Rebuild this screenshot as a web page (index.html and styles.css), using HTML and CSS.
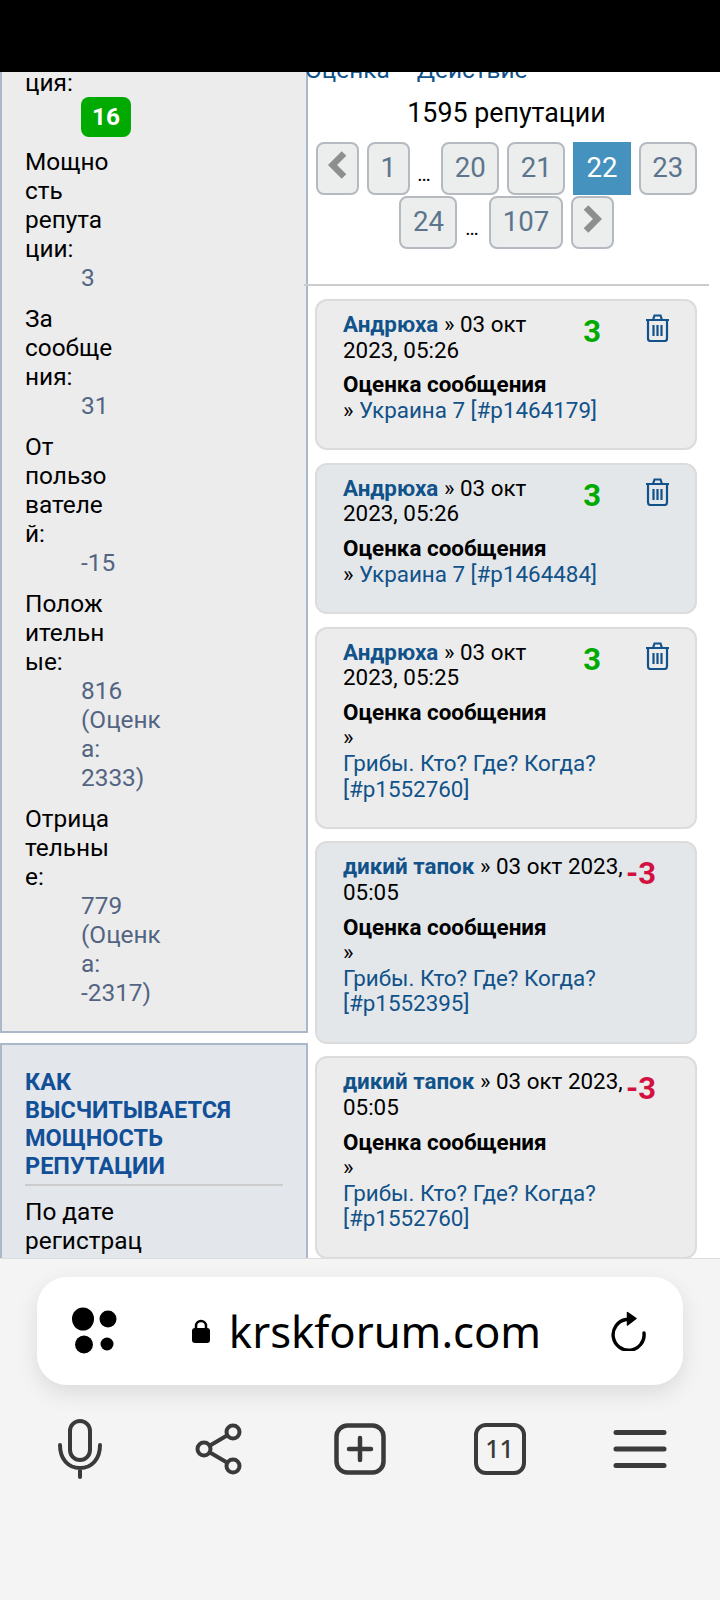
FILE: index.html
```html
<!DOCTYPE html>
<html lang="ru">
<head>
  <meta charset="UTF-8">
  <meta name="viewport" content="width=device-width, initial-scale=1.0">
  <title>Репутация</title>
  <link rel="stylesheet" href="styles.css">
</head>
<body>

<div class="status-bar"></div>

<div class="viewport">
  <div class="columns">

    <div class="sidebar">
      <div class="panel panel-stats">
        <dl class="stats">
          <dt>Репута<br>ция:</dt>
          <dd><span class="badge">16</span></dd>
          <dt>Мощно<br>сть<br>репута<br>ции:</dt>
          <dd>3</dd>
          <dt>За<br>сообще<br>ния:</dt>
          <dd>31</dd>
          <dt>От<br>пользо<br>вателе<br>й:</dt>
          <dd>-15</dd>
          <dt>Полож<br>ительн<br>ые:</dt>
          <dd>816<br>(Оценк<br>а:<br>2333)</dd>
          <dt>Отрица<br>тельны<br>е:</dt>
          <dd>779<br>(Оценк<br>а:<br>-2317)</dd>
        </dl>
      </div>
      <div class="panel panel-info">
        <h3>Как<br>высчитывается мощность репутации</h3>
        <p>По дате<br>регистрац<br>ии</p>
      </div>
    </div>

    <div class="main">
      <div class="tabs"><a href="#">Оценка</a><a href="#">Действие</a></div>
      <div class="total">1595 репутации</div>

      <div class="pagination">
        <a class="page-btn arrow" href="#">
          <svg width="19" height="28" viewBox="0 0 19 28"><path d="M16 2.5 4.500 14 16 25.500" fill="none" stroke="#8e8e8e" stroke-width="6.500"/></svg>
        </a>
        <a class="page-btn" href="#">1</a>
        <span class="dots">…</span>
        <a class="page-btn" href="#">20</a>
        <a class="page-btn" href="#">21</a>
        <a class="page-btn active" href="#">22</a>
        <a class="page-btn" href="#">23</a>
        <a class="page-btn" href="#">24</a>
        <span class="dots">…</span>
        <a class="page-btn" href="#">107</a>
        <a class="page-btn arrow" href="#">
          <svg width="19" height="28" viewBox="0 0 19 28"><path d="M3 2.500 14.500 14 3 25.500" fill="none" stroke="#8e8e8e" stroke-width="6.500"/></svg>
        </a>
      </div>

      <hr class="rule">

      <div class="card">
        <a class="trash" href="#">
          <svg width="25" height="28" viewBox="0 0 25 28" fill="none" stroke="#105289" stroke-width="2.200"><path d="M1 6h23M8 6l1.500-4.500h6L17 6M3 6v18.500a2.500 2.500 0 0 0 2.500 2.500h14a2.500 2.500 0 0 0 2.500-2.500V6M8.500 11v11M12.500 11v11M16.500 11v11"/></svg>
        </a>
        <span class="score plus">3</span>
        <div class="meta"><a class="author" href="#">Андрюха</a> » 03 окт 2023, 05:26</div>
        <div class="reason">Оценка сообщения</div>
        <div>» <a class="topic" href="#">Украина 7 [#p1464179]</a></div>
      </div>

      <div class="card alt">
        <a class="trash" href="#">
          <svg width="25" height="28" viewBox="0 0 25 28" fill="none" stroke="#105289" stroke-width="2.200"><path d="M1 6h23M8 6l1.500-4.500h6L17 6M3 6v18.500a2.500 2.500 0 0 0 2.500 2.500h14a2.500 2.500 0 0 0 2.500-2.500V6M8.500 11v11M12.500 11v11M16.500 11v11"/></svg>
        </a>
        <span class="score plus">3</span>
        <div class="meta"><a class="author" href="#">Андрюха</a> » 03 окт 2023, 05:26</div>
        <div class="reason">Оценка сообщения</div>
        <div>» <a class="topic" href="#">Украина 7 [#p1464484]</a></div>
      </div>

      <div class="card">
        <a class="trash" href="#">
          <svg width="25" height="28" viewBox="0 0 25 28" fill="none" stroke="#105289" stroke-width="2.200"><path d="M1 6h23M8 6l1.500-4.500h6L17 6M3 6v18.500a2.500 2.500 0 0 0 2.500 2.500h14a2.500 2.500 0 0 0 2.500-2.500V6M8.500 11v11M12.500 11v11M16.500 11v11"/></svg>
        </a>
        <span class="score plus">3</span>
        <div class="meta"><a class="author" href="#">Андрюха</a> » 03 окт 2023, 05:25</div>
        <div class="reason">Оценка сообщения</div>
        <div>» <a class="topic" href="#">Грибы. Кто? Где? Когда? [#p1552760]</a></div>
      </div>

      <div class="card alt">
        <span class="score minus">-3</span>
        <div class="meta"><a class="author" href="#">дикий тапок</a> » 03 окт 2023, 05:05</div>
        <div class="reason">Оценка сообщения</div>
        <div>» <a class="topic" href="#">Грибы. Кто? Где? Когда? [#p1552395]</a></div>
      </div>

      <div class="card">
        <span class="score minus">-3</span>
        <div class="meta"><a class="author" href="#">дикий тапок</a> » 03 окт 2023, 05:05</div>
        <div class="reason">Оценка сообщения</div>
        <div>» <a class="topic" href="#">Грибы. Кто? Где? Когда? [#p1552760]</a></div>
      </div>
    </div>

  </div>
</div>

<div class="browser-bar">
  <div class="url-pill">
    <svg class="dots-icon" width="50" height="50" viewBox="0 0 50 50" fill="#000">
      <ellipse cx="12" cy="13" rx="11" ry="11.500"/>
      <circle cx="37" cy="13" r="8.500"/>
      <circle cx="13" cy="38.500" r="9"/>
      <circle cx="36" cy="38" r="6.500"/>
    </svg>
    <div class="url">
      <svg width="20" height="24" viewBox="0 0 20 24"><path d="M5 10V7a5 5 0 0 1 10 0v3" fill="none" stroke="#000" stroke-width="2.500"/><rect x="1" y="9" width="18" height="15" rx="3"/></svg>
      <span>krskforum.com</span>
    </div>
    <svg class="reload" width="36" height="40" viewBox="0 0 36 40" fill="none" stroke="#000" stroke-width="3.400" stroke-linecap="round">
      <path d="M15 8.500A15.500 15.500 0 1 0 33 22"/>
      <path d="M16.500 1.500 25 7.500 16.500 14z" fill="#000" stroke-width="1.500" stroke-linejoin="round"/>
    </svg>
  </div>

  <div class="tool-row">
    <svg width="44" height="60" viewBox="0 0 44 60" fill="none" stroke="#3a3a3a" stroke-width="4" stroke-linecap="round">
      <rect x="12" y="2" width="20" height="39" rx="10"/>
      <path d="M2 26c0 14 8 23 20 23s20-9 20-23M22 49v9"/>
    </svg>
    <svg width="50" height="52" viewBox="0 0 50 52" fill="none" stroke="#3a3a3a" stroke-width="4">
      <circle cx="9" cy="26" r="6.500"/>
      <circle cx="38" cy="9" r="6.500"/>
      <circle cx="38" cy="43" r="6.500"/>
      <path d="M15 22.500 32 12.500M15 29.500 32 39.500"/>
    </svg>
    <svg width="52" height="52" viewBox="0 0 52 52" fill="none" stroke="#3a3a3a">
      <rect x="2.500" y="2.500" width="47" height="47" rx="11" stroke-width="4.500"/>
      <path d="M15 26h22M26 15v22" stroke-width="4.500" stroke-linecap="round"/>
    </svg>
    <div class="tab-count">11</div>
    <svg width="54" height="40" viewBox="0 0 54 40" fill="none" stroke="#3a3a3a" stroke-width="5" stroke-linecap="round">
      <path d="M3 3.500h48M3 20h48M3 36.500h48"/>
    </svg>
  </div>
</div>

</body>
</html>
```

FILE: styles.css
```css
* {
  box-sizing: border-box;
}
html, body {
  height: 100%;
}
body {
  margin: 0;
  width: 720px;
  height: 1600px;
  overflow: hidden;
  background: #fff;
  color: #000;
  font-family: Roboto, "Liberation Sans", sans-serif;
  font-size: 23px;
}
a {
  color: #105289;
  text-decoration: none;
}
.status-bar {
  height: 72px;
  background: #000;
}
.viewport {
  height: 1186px;
  overflow: hidden;
}
.columns {
  display: flex;
  margin-top: -33.5px;
}

/* left column */
.sidebar {
  width: 308px;
  flex: none;
}
.panel {
  border: 2px solid #a9b9c9;
  padding: 0 23px;
}
.panel-stats {
  background: #ececec;
  padding-bottom: 11.5px;
  border-top: none;
}
.panel-info {
  margin-top: 10px;
  padding-top: 23px;
  background: #e3e6ea;
}
.stats {
  margin: 0;
  font-size: 24.4px;
  line-height: 29px;
}
.stats dd {
  margin: 0 0 12px 56px;
  color: #536482;
}
.badge {
  display: block;
  width: 50px;
  height: 40px;
  margin-bottom: -1.5px;
  background: #00aa00;
  border-radius: 8px;
  color: #fff;
  font-weight: 700;
  line-height: 40px;
  text-align: center;
}
.panel-info h3 {
  margin: 0;
  padding-bottom: 4px;
  border-bottom: 2px solid #cccccc;
  color: #115098;
  font-size: 23.5px;
  line-height: 28px;
  text-transform: uppercase;
}
.panel-info p {
  margin: 11.5px 0 0;
  font-size: 24.4px;
  line-height: 29px;
}

/* right column */
.main {
  flex: 1;
  min-width: 0;
  padding-top: 16.5px;
}
.tabs {
  display: flex;
  gap: 27px;
  margin-left: -3px;
  font-size: 24.4px;
  line-height: 29px;
}
.total {
  width: 405px;
  margin: 15px 0 14px -4px;
  font-size: 26.800px;
  line-height: 29px;
  text-align: center;
}
.pagination {
  display: flex;
  flex-wrap: wrap;
  justify-content: center;
  gap: 1px 7.800px;
  width: 405px;
  margin-left: -4px;
}
.page-btn {
  display: flex;
  justify-content: center;
  height: 53px;
  padding: 0 11.500px;
  background: #eceded;
  border: 2px solid #b5bac1;
  border-radius: 8px;
  color: #5c758c;
  font-size: 27.600px;
  line-height: 48px;
}
.page-btn.active {
  background: #4692bf;
  border-color: #4692bf;
  border-radius: 0;
  color: #fff;
}
.page-btn.arrow {
  width: 43px;
  padding: 7px 0 0;
}
.dots {
  width: 24px;
  height: 53px;
  margin-right: -7.800px;
  font-size: 20px;
  line-height: 64px;
}
.rule {
  width: 405px;
  height: 2px;
  margin: 35px 0 13px -4px;
  background: #cccccc;
  border: none;
}
.card {
  width: 382px;
  margin: 0 0 12.400px 7px;
  padding: 11px 25px 25px 26px;
  background: #ececec;
  border: 2px solid #dcdcdc;
  border-radius: 12px;
  font-size: 22.400px;
  line-height: 25.600px;
}
.card.alt {
  background: #e4e7ea;
}
.card::after {
  content: "";
  display: block;
  clear: both;
}
.trash {
  float: right;
  margin-left: 30px;
  padding-top: 2px;
  line-height: 0;
}
.score {
  float: right;
  margin: 6px 14px 0 0;
  font-size: 31px;
  font-weight: 700;
  line-height: 28px;
}
.plus {
  color: #00aa00;
}
.minus {
  color: #d31141;
}
.author {
  font-weight: 700;
}
.reason {
  margin-top: 9px;
  font-weight: 700;
}
.topic {
  display: inline-block;
  vertical-align: top;
}

/* browser chrome */
.browser-bar {
  height: 342px;
  padding: 18px 37px 0;
  background: #f4f4f4;
  border-top: 1px solid #dddddd;
}
.url-pill {
  display: flex;
  align-items: center;
  height: 108px;
  padding: 0 36px 0 34px;
  background: #fff;
  border-radius: 30px;
  box-shadow: 0 8px 22px rgba(0, 0, 0, 0.1);
}
.url {
  display: flex;
  flex: 1;
  align-items: center;
  justify-content: center;
  gap: 18px;
  font-family: "Noto Sans", sans-serif;
  font-size: 43.600px;
}
.tool-row {
  display: grid;
  grid-template-columns: repeat(5, 140px);
  justify-items: center;
  align-items: center;
  height: 60px;
  margin: 34px 0 0 -27.500px;
}
.tab-count {
  width: 52px;
  height: 52px;
  border: 4.500px solid #3a3a3a;
  border-radius: 12px;
  color: #3a3a3a;
  font-family: "Noto Sans", sans-serif;
  font-size: 25px;
  font-weight: 500;
  line-height: 43px;
  text-align: center;
}
```
